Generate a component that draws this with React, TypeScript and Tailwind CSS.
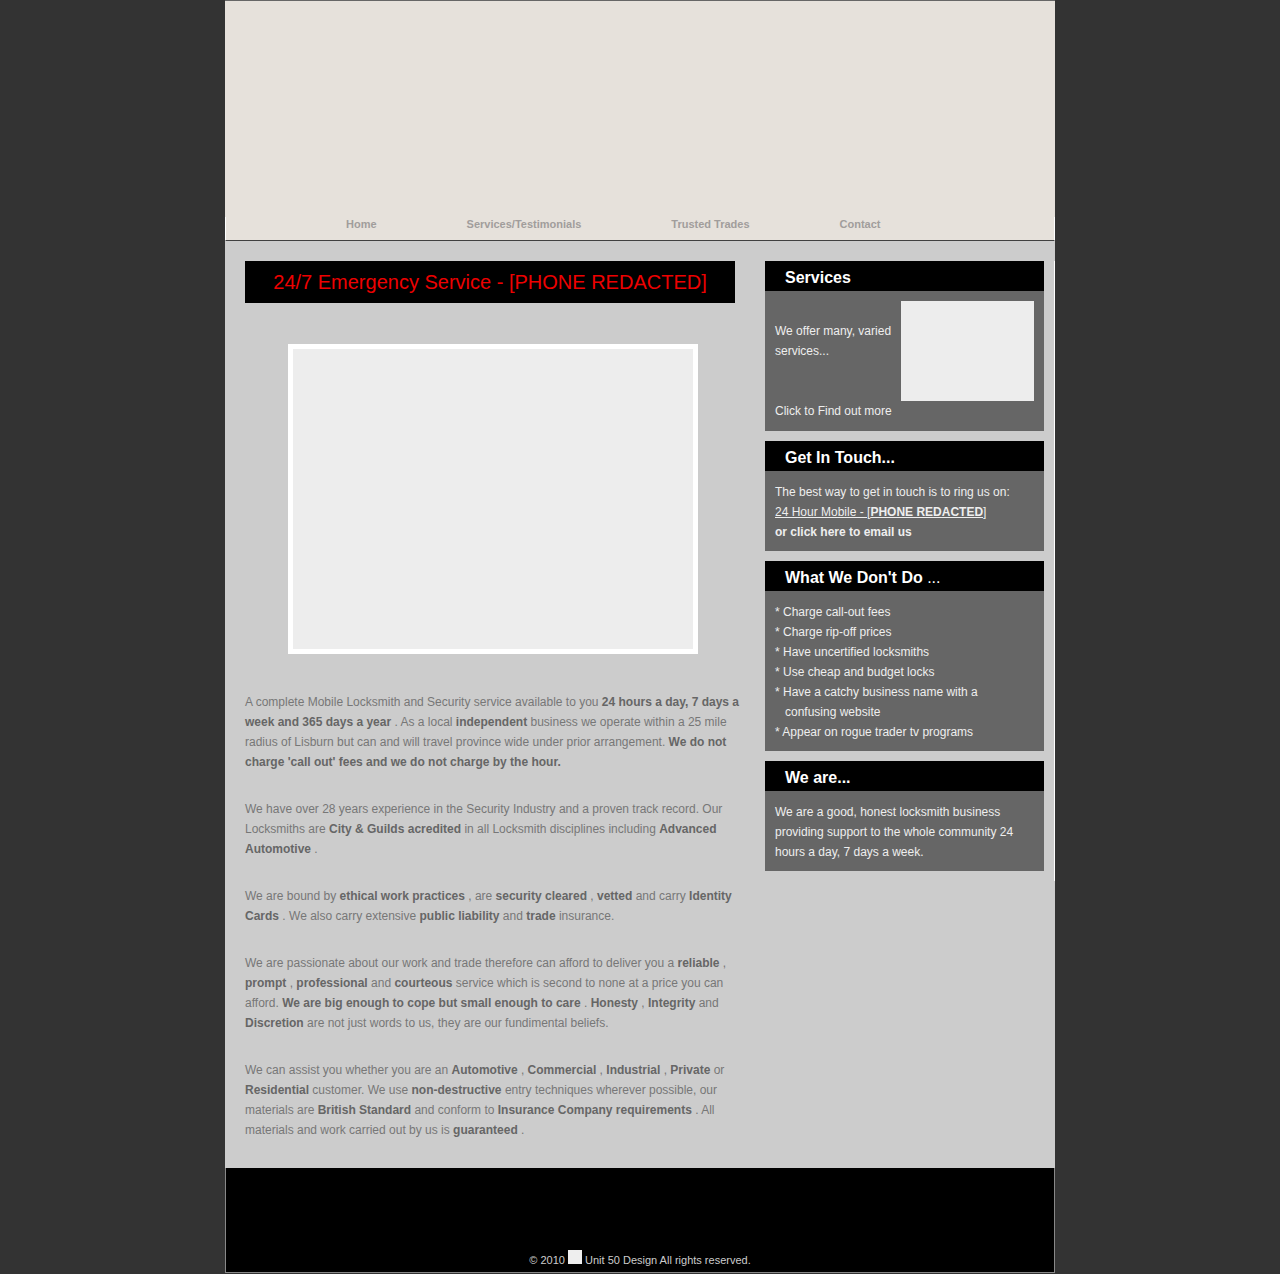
import type { ReactNode } from "react";

const B = ({ children }: { children: ReactNode }) => <strong className="font-bold text-[#666]">{children}</strong>;

function SideBox({ title, children, even }: { title: ReactNode; children: ReactNode; even?: boolean }) {
  return (
    <div className="w-[279px]">
      <div className="flex h-[30px] items-center bg-black pl-[20px] pt-[4px] text-[16px] font-bold text-white">{title}</div>
      <div className={even ? "bg-[#666] p-[10px] text-[12px] leading-[20px] text-[#eee]" : "bg-[#666] px-[10px] pb-[9px] pt-[11px] text-[12px] leading-[20px] text-[#eee]"}>{children}</div>
    </div>
  );
}

export default function App() {
  const nav = ["Home", "Services/Testimonials", "Trusted Trades", "Contact"];
  return (
    <div className="min-h-[1274px] bg-[#333] font-['Liberation_Sans',Arial,sans-serif]">
      <div className="mx-auto w-[830px]">
        <header className="border-t border-[#666] bg-[#e6e1db]">
          <div className="h-[216px]" />
          <nav className="flex h-[24px] gap-[90px] border-x border-b border-x-white border-b-[#404040] pl-[120px] text-[11px] font-bold leading-[14px] text-[#a19d9b]">
            {nav.map((n) => (
              <a key={n} href="#">{n}</a>
            ))}
          </nav>
        </header>

        <main className="flex gap-[24px] bg-[#ccc] pb-[28px] pl-[20px] pt-[20px]">
          <div className="w-[496px]">
            <div className="flex h-[42px] w-[490px] items-center justify-center bg-black text-[20px] text-[#ee0000]">
              24/7 Emergency Service - [PHONE REDACTED]
            </div>
            <div className="mx-auto mt-[41px] h-[310px] w-[410px] border-[5px] border-white bg-[#ededed]" />
            <div className="mt-[38px] space-y-[27px] text-[12px] leading-[20px] text-[#777]">
              <p>
                A complete Mobile Locksmith and Security service available to you <B>24 hours a day, 7 days a week and 365 days a year</B> . As a local <B>independent</B> business we operate within a 25 mile radius of Lisburn but can and will travel province wide under prior arrangement. <B>We do not charge 'call out' fees and we do not charge by the hour.</B>
              </p>
              <p>
                We have over 28 years experience in the Security Industry and a proven track record. Our Locksmiths are <B>City &amp; Guilds acredited</B> in all Locksmith disciplines including <B>Advanced Automotive</B> .
              </p>
              <p>
                We are bound by <B>ethical work practices</B> , are <B>security cleared</B> , <B>vetted</B> and carry <B>Identity Cards</B> . We also carry extensive <B>public liability</B> and <B>trade</B> insurance.
              </p>
              <p>
                We are passionate about our work and trade therefore can afford to deliver you a <B>reliable</B> , <B>prompt</B> , <B>professional</B> and <B>courteous</B> service which is second to none at a price you can afford. <B>We are big enough to cope but small enough to care</B> . <B>Honesty</B> , <B>Integrity</B> and <B>Discretion</B> are not just words to us, they are our fundimental beliefs.
              </p>
              <p>
                We can assist you whether you are an <B>Automotive</B> , <B>Commercial</B> , <B>Industrial</B> , <B>Private</B> or <B>Residential</B> customer. We use <B>non-destructive</B> entry techniques wherever possible, our materials are <B>British Standard</B> and conform to <B>Insurance Company requirements</B> . All materials and work carried out by us is <B>guaranteed</B> .
              </p>
            </div>
          </div>

          <aside className="flex h-[620px] w-[290px] flex-col gap-[10px] border-r border-white pr-[10px]">
            <SideBox title="Services" even>
              <div className="flex justify-between">
                <p className="w-[120px] pt-[20px]">We offer many, varied services...</p>
                <div className="h-[100px] w-[133px] bg-[#ededed]" />
              </div>
              <p>Click to Find out more</p>
            </SideBox>
            <SideBox title="Get In Touch...">
              <p>The best way to get in touch is to ring us on:</p>
              <p className="underline">
                24 Hour Mobile - [<span className="font-bold">PHONE REDACTED</span>]
              </p>
              <p className="font-bold">or click here to email us</p>
            </SideBox>
            <SideBox
              title={
                <>
                  What We Don't Do<span className="font-normal">&nbsp;...</span>
                </>
              }
            >
              <p>* Charge call-out fees</p>
              <p>* Charge rip-off prices</p>
              <p>* Have uncertified locksmiths</p>
              <p>* Use cheap and budget locks</p>
              <p>
                * Have a catchy business name with a<br />
                <span className="pl-[10px]">confusing website</span>
              </p>
              <p>* Appear on rogue trader tv programs</p>
            </SideBox>
            <SideBox title="We are...">
              <p>We are a good, honest locksmith business providing support to the whole community 24 hours a day, 7 days a week.</p>
            </SideBox>
          </aside>
        </main>

        <footer className="flex h-[105px] items-end justify-center border-x border-b border-[#888] bg-black pb-[5px] text-[11px] leading-[14px] text-[#ccc]">
          <span className="flex items-center">
            © 2010&nbsp;<span className="inline-block h-[14px] w-[14px] -translate-y-[3px] bg-[#eee]" />&nbsp;Unit 50 Design All rights reserved.
          </span>
        </footer>
      </div>
    </div>
  );
}
